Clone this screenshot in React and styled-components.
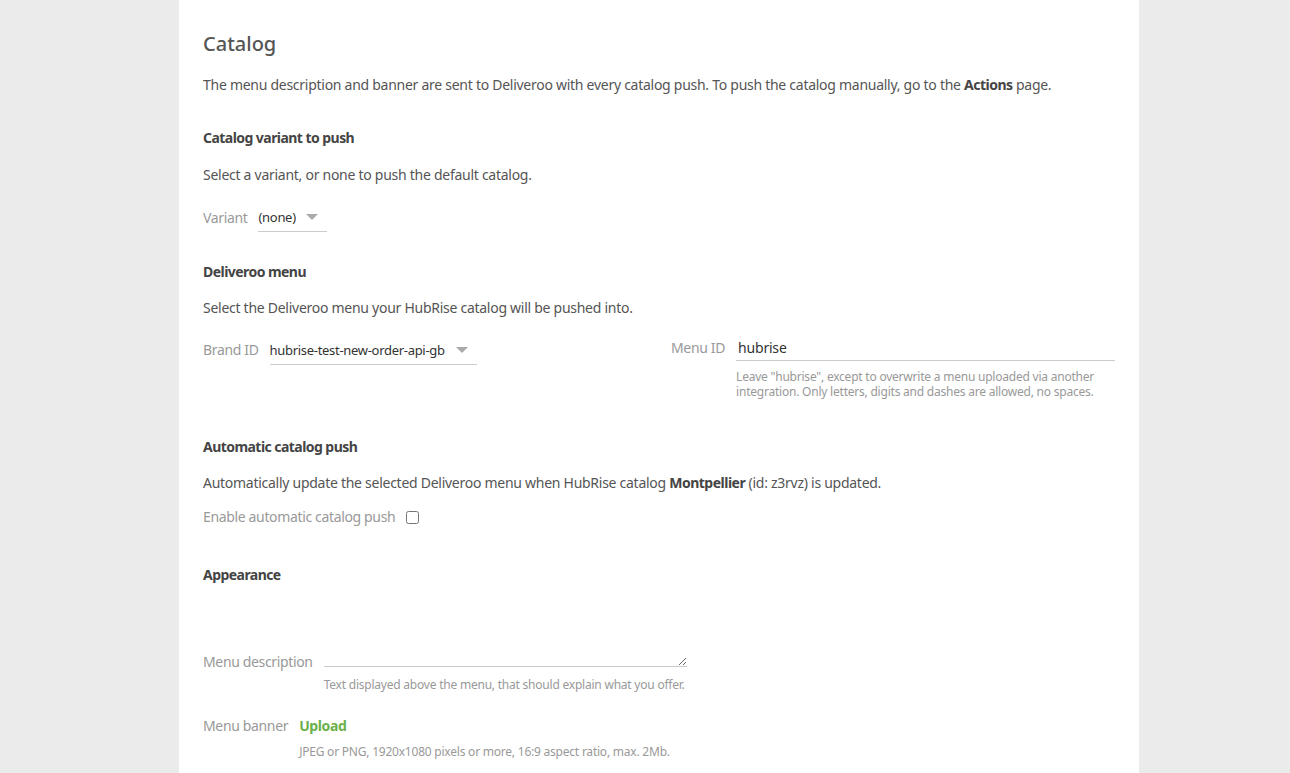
import React from "react";
import styled, { createGlobalStyle } from "styled-components";

const GlobalStyle = createGlobalStyle`
  html, body {
    margin: 0;
    padding: 0;
    background: #ebebeb;
    overflow: hidden;
  }
  body {
    font-family: "Noto Sans", "Open Sans", sans-serif;
    font-size: 14px;
    letter-spacing: -0.27px;
    color: #555;
  }
`;

const Page = styled.div`
  display: flex;
  height: 773px;
  padding-left: 179px;
`;

const Panel = styled.div`
  width: 960px;
  box-sizing: border-box;
  background: #fff;
  padding: 30px 24px 0;
`;

const Title = styled.h1`
  margin: 0 0 17px;
  font-size: 20px;
  line-height: 28px;
  font-weight: 500;
  letter-spacing: 0;
  color: #555;
`;

const Text = styled.p`
  margin: 0;
  line-height: 20px;
  color: #555;
  b {
    font-weight: 700;
    color: #444;
    letter-spacing: -0.5px;
  }
`;

const Heading = styled.h3`
  margin: ${(p) => p.$top || 33}px 0 ${(p) => p.$bottom || 17}px;
  font-size: 14px;
  line-height: 20px;
  font-weight: 700;
  letter-spacing: -0.55px;
  color: #444;
`;

const Row = styled.div`
  display: flex;
  align-items: ${(p) => p.$align || "center"};
  gap: 11px;
  margin-top: ${(p) => p.$top || 0}px;
`;

const Columns = styled.div`
  display: grid;
  grid-template-columns: 1fr 1fr;
  gap: 24px;
  margin-top: 18px;
`;

const Label = styled.label`
  color: #999;
  letter-spacing: -0.35px;
  line-height: ${(p) => p.$line || 20}px;
  margin-top: ${(p) => p.$top || 0}px;
  white-space: nowrap;
`;

const SelectWrap = styled.div`
  position: relative;
  display: inline-flex;
  border-bottom: 1px solid #ccc;
  &::after {
    content: "";
    position: absolute;
    right: 9px;
    top: 11px;
    border-left: 6px solid transparent;
    border-right: 6px solid transparent;
    border-top: 6px solid #aaa;
    pointer-events: none;
  }
`;

const Select = styled.select`
  appearance: none;
  border: none;
  background: transparent;
  font-family: inherit;
  font-size: 13px;
  letter-spacing: -0.3px;
  color: #333;
  padding: 4px 31px 4px 0;
  height: 28px;
  outline: none;
`;

const Field = styled.div`
  display: flex;
  flex-direction: column;
  width: ${(p) => (p.$width ? p.$width + "px" : "auto")};
  flex: ${(p) => (p.$width ? "none" : 1)};
`;

const Input = styled.input`
  box-sizing: border-box;
  border: none;
  border-bottom: 1px solid #ccc;
  font-family: inherit;
  font-size: 14px;
  letter-spacing: -0.2px;
  color: #333;
  padding: 0 2px 1px;
  height: 25px;
  outline: none;
`;

const TextArea = styled.textarea`
  box-sizing: border-box;
  border: none;
  border-bottom: 1px solid #ccc;
  font-family: inherit;
  font-size: 14px;
  height: 65px;
  padding: 0;
  outline: none;
  display: block;
`;

const Help = styled.div`
  font-size: 12px;
  line-height: 15px;
  letter-spacing: -0.22px;
  color: #999;
  margin-top: ${(p) => p.$top || 8}px;
  white-space: ${(p) => (p.$nowrap ? "nowrap" : "normal")};
`;

const Checkbox = styled.input`
  margin: 0;
  width: 13px;
  height: 13px;
`;

const UploadLink = styled.a`
  color: #6ab04c;
  font-weight: 700;
  letter-spacing: -0.4px;
  text-decoration: none;
  line-height: 20px;
`;

export default function App() {
  return (
    <>
      <GlobalStyle />
      <Page>
        <Panel>
          <Title>Catalog</Title>
          <Text>
            The menu description and banner are sent to Deliveroo with every catalog push. To push the
            catalog manually, go to the <b>Actions</b> page.
          </Text>

          <Heading>Catalog variant to push</Heading>
          <Text>Select a variant, or none to push the default catalog.</Text>
          <Row $top={18}>
            <Label>Variant</Label>
            <SelectWrap>
              <Select defaultValue="none">
                <option value="none">(none)</option>
              </Select>
            </SelectWrap>
          </Row>

          <Heading $top={30} $bottom={16}>Deliveroo menu</Heading>
          <Text>Select the Deliveroo menu your HubRise catalog will be pushed into.</Text>
          <Columns>
            <Row $align="flex-start">
              <Label $line={28}>Brand ID</Label>
              <SelectWrap>
                <Select defaultValue="gb">
                  <option value="gb">hubrise-test-new-order-api-gb</option>
                </Select>
              </SelectWrap>
            </Row>
            <Row $align="flex-start">
              <Label $line={24}>Menu ID</Label>
              <Field>
                <Input defaultValue="hubrise" />
                <Help>
                  Leave "hubrise", except to overwrite a menu uploaded via another integration. Only
                  letters, digits and dashes are allowed, no spaces.
                </Help>
              </Field>
            </Row>
          </Columns>

          <Heading $top={38} $bottom={16}>Automatic catalog push</Heading>
          <Text>
            Automatically update the selected Deliveroo menu when HubRise catalog <b>Montpellier</b>{" "}
            (id: z3rvz) is updated.
          </Text>
          <Row $top={14}>
            <Label>Enable automatic catalog push</Label>
            <Checkbox type="checkbox" />
          </Row>

          <Heading $top={38}>Appearance</Heading>
          <Row $align="flex-start">
            <Label $top={50}>Menu description</Label>
            <Field $width={363}>
              <TextArea />
              <Help $top={10} $nowrap>
                Text displayed above the menu, that should explain what you offer.
              </Help>
            </Field>
          </Row>
          <Row $align="flex-start" $top={24}>
            <Label>Menu banner</Label>
            <Field>
              <UploadLink href="#">Upload</UploadLink>
              <Help $top={8}>JPEG or PNG, 1920x1080 pixels or more, 16:9 aspect ratio, max. 2Mb.</Help>
            </Field>
          </Row>
        </Panel>
      </Page>
    </>
  );
}
